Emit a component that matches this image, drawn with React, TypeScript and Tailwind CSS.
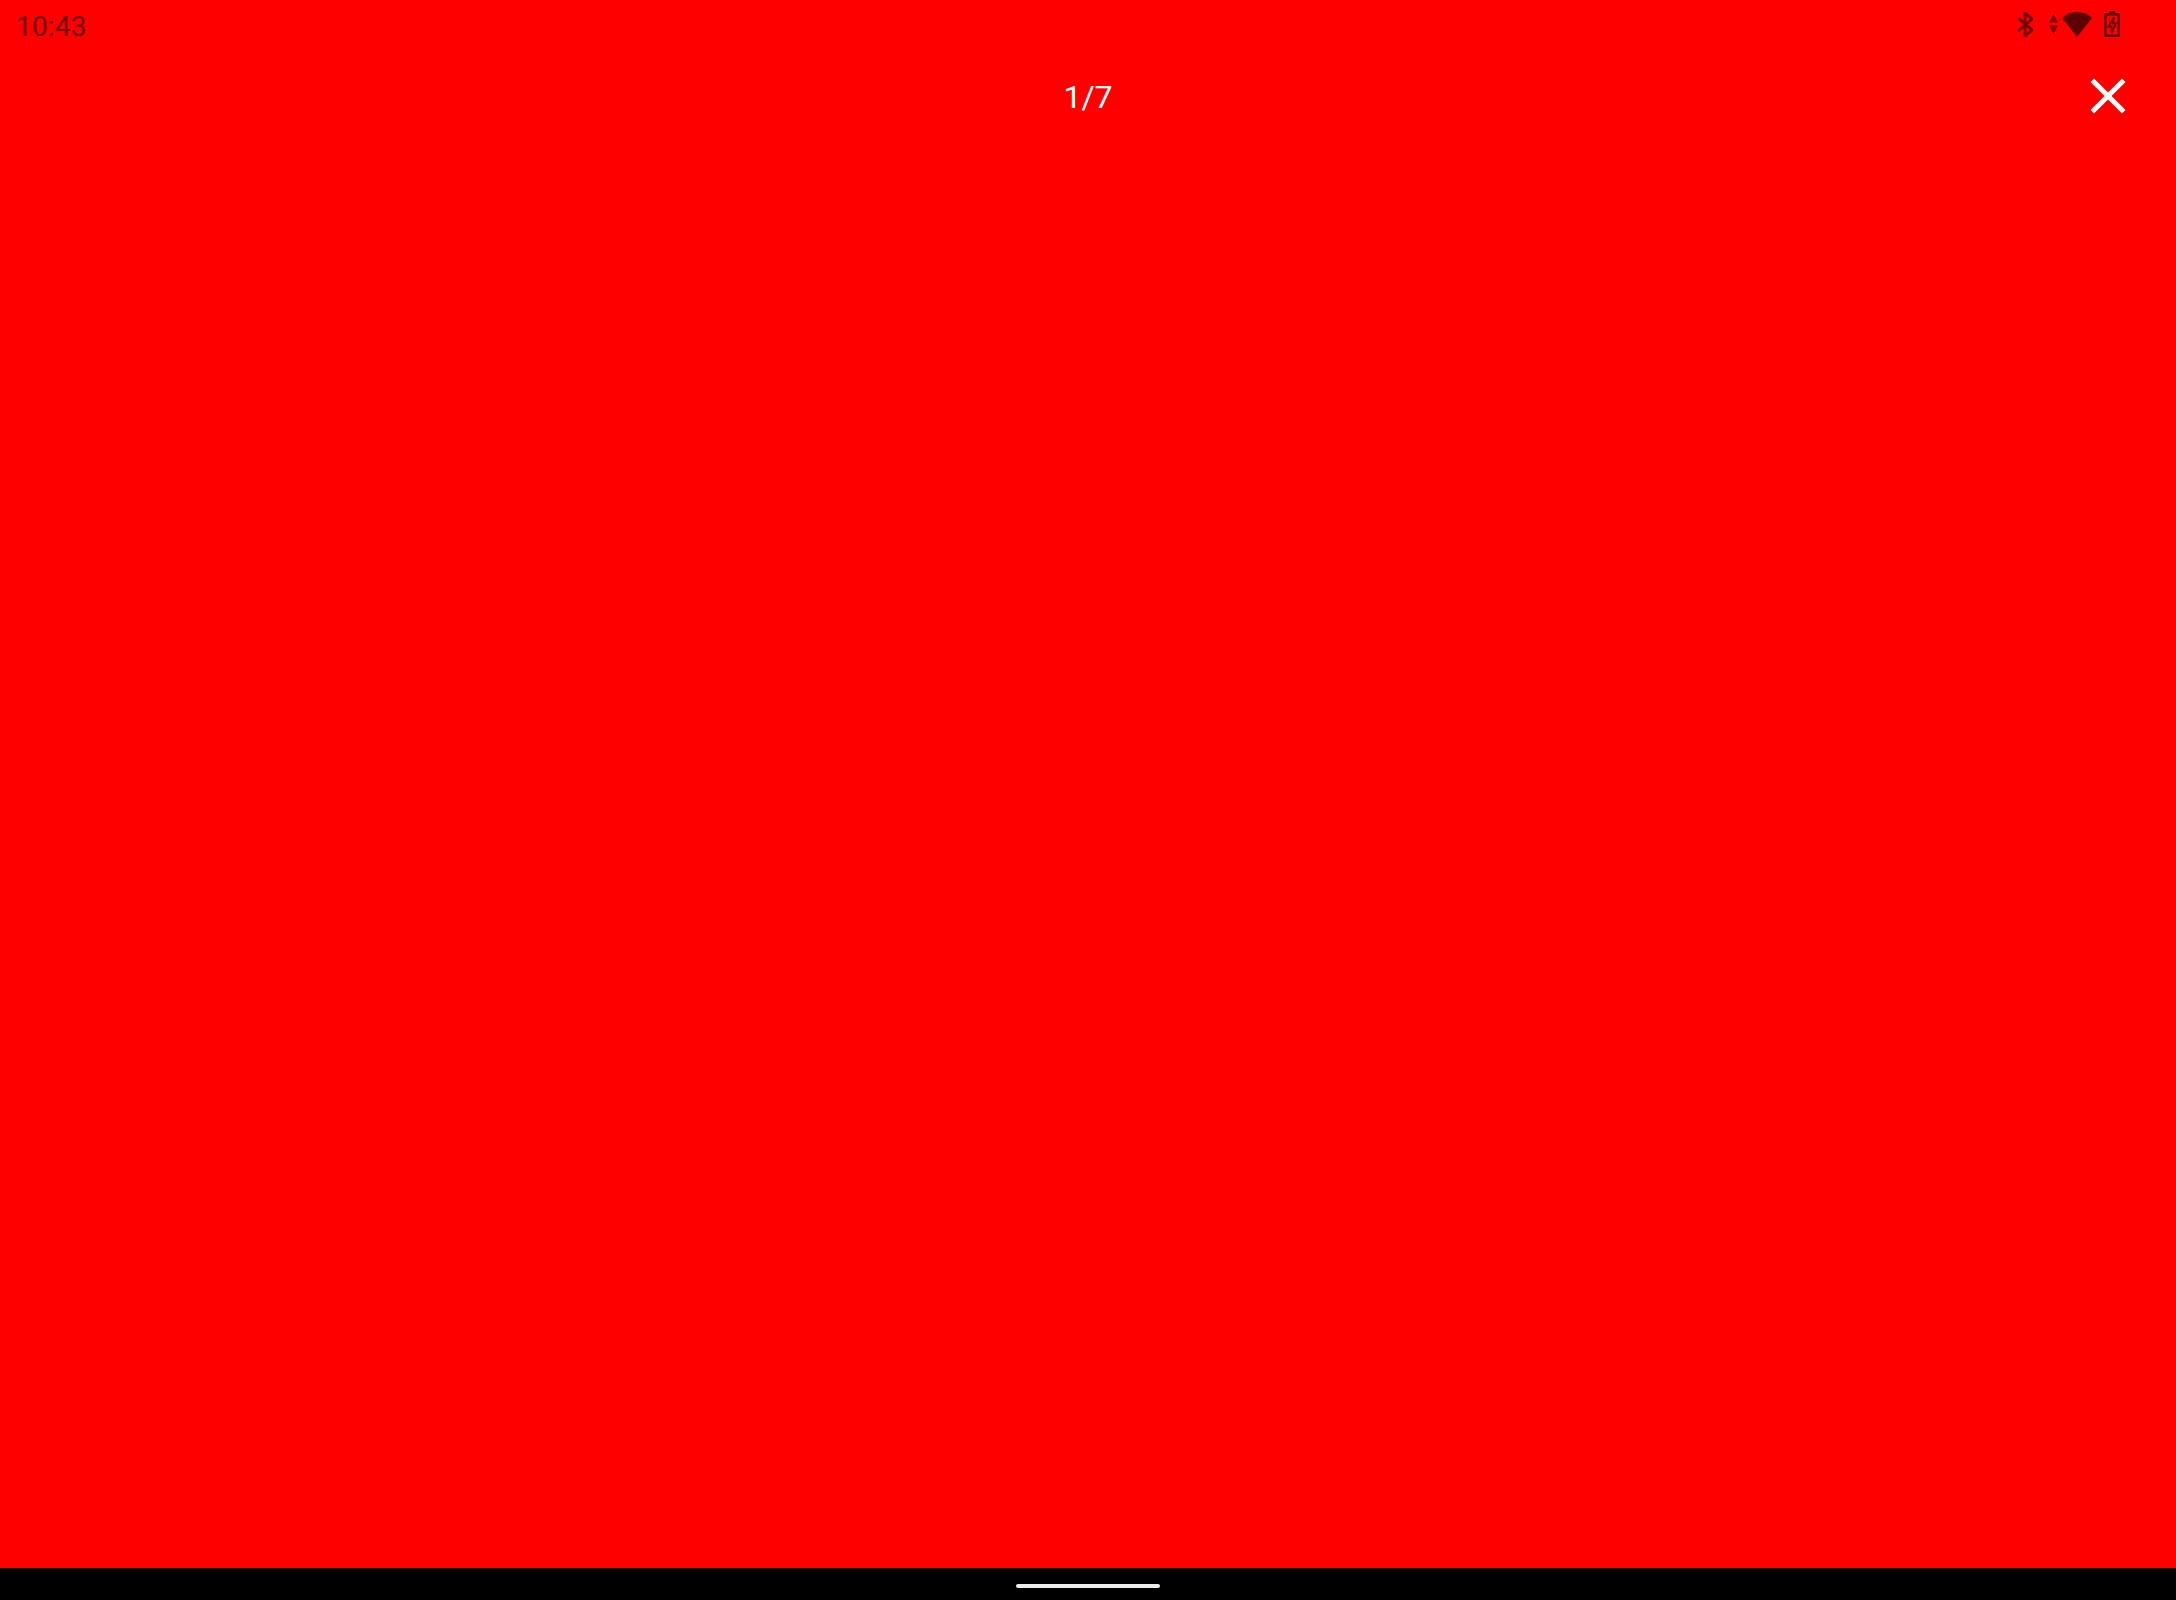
function CloseIcon() {
  return (
    <svg width="60" height="60" viewBox="0 0 24 24" fill="#ffffff">
      <path d="M19 6.41 17.59 5 12 10.59 6.41 5 5 6.41 10.59 12 5 17.59 6.41 19 12 13.41 17.59 19 19 17.59 13.41 12z" />
    </svg>
  );
}

function StatusIcons() {
  return (
    <div className="flex items-center pr-[56px]">
      {/* bluetooth */}
      <svg width="16" height="25" viewBox="0 0 16 25" fill="none" stroke="#700000" strokeWidth="2.8" className="mr-[16px]">
        <path d="M1 6 15 18 8 24V1L15 7 1 19" />
      </svg>
      {/* data arrows */}
      <svg width="9" height="20" viewBox="0 0 9 20" fill="#800000" className="mr-[4px]">
        <path d="M4.500 0 9 8.500H0zM0 11.500H9L4.500 20z" />
      </svg>
      {/* wifi */}
      <svg width="30" height="25" viewBox="0 0 30 25" fill="#5c0000" className="mr-[12px]">
        <path d="M0 6C4 2 9 0 15 0s11 2 15 6L15 25z" />
      </svg>
      {/* battery */}
      <svg width="16" height="26" viewBox="0 0 16 26">
        <path
          fillRule="evenodd"
          fill="#660000"
          d="M5 0h6v2h3.500A1.500 1.500 0 0 1 16 3.500v21a1.500 1.500 0 0 1-1.500 1.500H1.500A1.500 1.500 0 0 1 0 24.500v-21A1.500 1.500 0 0 1 1.500 2H5zM2.500 4.500v19h11v-19z"
        />
        <path d="M10 6 4.500 15.500h3V22L12 12.500H9z" fill="#ff0000" stroke="#660000" strokeWidth="1.8" />
      </svg>
    </div>
  );
}

export default function App() {
  return (
    <div className="flex h-[1600px] w-[2176px] flex-col bg-[#ff0000] font-['Roboto',sans-serif]">
      {/* status bar */}
      <div className="flex h-[48px] items-center justify-between pl-[16px]">
        <span className="pt-[5px] text-[28px] leading-[48px] tracking-[0.2px] text-[#700000]">10:43</span>
        <StatusIcons />
      </div>

      {/* toolbar */}
      <div className="relative flex h-[96px] items-center justify-center pt-[2px]">
        <span className="text-[32px] leading-[48px] text-white">1/7</span>
        <button className="absolute right-[38px] top-0 flex h-[95px] items-center justify-center">
          <CloseIcon />
        </button>
      </div>

      <div className="flex-1" />

      {/* navigation bar */}
      <div className="flex h-[32px] items-center justify-center bg-black pt-[4px]">
        <div className="h-[4px] w-[144px] rounded-full bg-[#ececec]" />
      </div>
    </div>
  );
}
